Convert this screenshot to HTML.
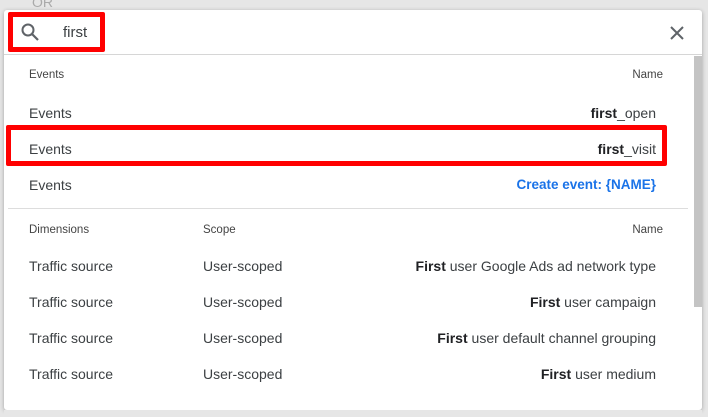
<!DOCTYPE html>
<html><head><meta charset="utf-8"><style>
*{margin:0;padding:0;box-sizing:border-box}
body{width:708px;height:417px;overflow:hidden;background:#e6e6e6;font-family:"Liberation Sans",Arial,sans-serif;color:#3c4043;position:relative}
.dlg{position:absolute;left:4px;top:10px;width:698px;height:400px;background:#fff;border-radius:3px;box-shadow:0 1px 4px rgba(0,0,0,.3)}
.t{position:absolute;white-space:nowrap;font-size:14px;color:#3c4043;line-height:16px}
.h{font-size:11.5px;color:#444}
.r{right:46px;text-align:right}
b{color:#202124}
.red{position:absolute;border:5px solid #f00;border-radius:2px}
.line{position:absolute;height:1px;background:#ddd}
</style></head><body>
<div class="t" style="left:32px;top:-6px;color:#aaa;font-size:14px">OR</div>
<div class="dlg"></div>
<div class="line" style="left:4px;top:54px;width:698px;background:#d6d6d6"></div>
<svg style="position:absolute;left:20px;top:22px" width="20" height="20" viewBox="0 0 20 20"><circle cx="8" cy="8" r="5.5" fill="none" stroke="#5f6368" stroke-width="2"/><path d="M12 12l6 6" stroke="#5f6368" stroke-width="2.2"/></svg>
<div class="t" style="left:63px;top:25px;font-size:15px">first</div>
<div class="red" style="left:8px;top:12px;width:97px;height:40px"></div>
<svg style="position:absolute;left:669px;top:25px" width="16" height="16" viewBox="0 0 16 16"><path d="M2 2L14 14M14 2L2 14" stroke="#5f6368" stroke-width="2"/></svg>
<div style="position:absolute;left:694px;top:56px;width:8px;height:251px;background:#c4c4c4"></div>

<div class="t h" style="left:29px;top:67px">Events</div>
<div class="t h r" style="top:67px;right:45px">Name</div>
<div class="t" style="left:29px;top:105px">Events</div>
<div class="t r" style="top:105px;right:52px"><b>first</b>_open</div>
<div class="t" style="left:29px;top:141px">Events</div>
<div class="t r" style="top:141px;right:52px"><b>first</b>_visit</div>
<div class="red" style="left:6px;top:125px;width:661px;height:41px"></div>
<div class="t" style="left:29px;top:177px">Events</div>
<div class="t r" style="top:177px;right:52px;color:#1a73e8;font-weight:bold;font-size:13.5px">Create event: {NAME}</div>
<div class="line" style="left:8px;top:208px;width:680px"></div>

<div class="t h" style="left:29px;top:222px">Dimensions</div>
<div class="t h" style="left:203px;top:222px">Scope</div>
<div class="t h r" style="top:222px;right:45px">Name</div>
<div class="t" style="left:29px;top:258px">Traffic source</div><div class="t" style="left:203px;top:258px">User-scoped</div><div class="t r" style="top:258px;right:52px"><b>First</b> user Google Ads ad network type</div>
<div class="t" style="left:29px;top:294px">Traffic source</div><div class="t" style="left:203px;top:294px">User-scoped</div><div class="t r" style="top:294px;right:52px"><b>First</b> user campaign</div>
<div class="t" style="left:29px;top:330px">Traffic source</div><div class="t" style="left:203px;top:330px">User-scoped</div><div class="t r" style="top:330px;right:52px"><b>First</b> user default channel grouping</div>
<div class="t" style="left:29px;top:366px">Traffic source</div><div class="t" style="left:203px;top:366px">User-scoped</div><div class="t r" style="top:366px;right:52px"><b>First</b> user medium</div>
<div style="position:absolute;left:4px;top:410px;width:698px;height:7px;background:#e6e6e6"></div>
</body></html>
